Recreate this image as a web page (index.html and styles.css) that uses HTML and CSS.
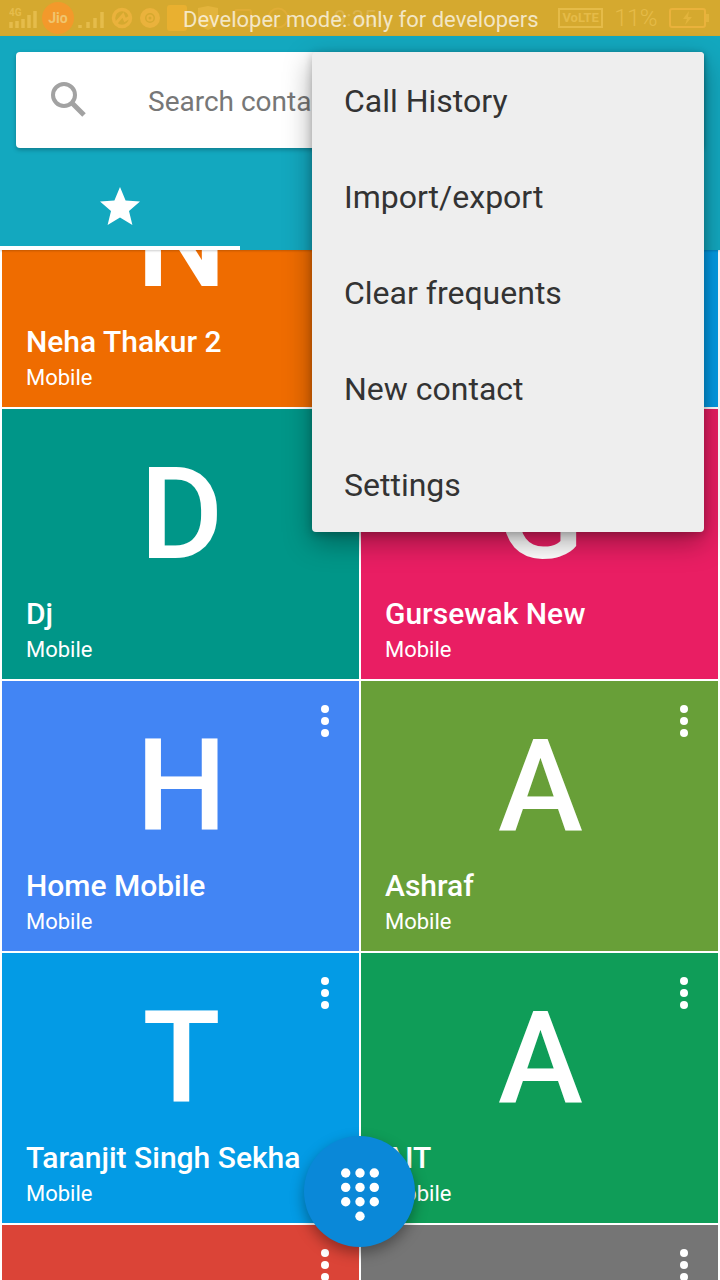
FILE: index.html
```html
<!DOCTYPE html>
<html lang="en">
<head>
<meta charset="utf-8">
<title>Contacts</title>
<link rel="stylesheet" href="styles.css">
</head>
<body>
<div class="screen">
  <div class="status">
    <div class="status-left">
      <svg class="sig4g" width="28" height="24" viewBox="0 0 28 24"><text x="0" y="10" class="tiny">4G</text><path d="M2 22v-6M8 22v-7M14 22v-9" class="bar"/><path d="M20 22V9M26 22V5" class="bar"/></svg>
      <span class="jio">Jio</span>
      <svg class="sig2" width="26" height="24" viewBox="0 0 26 24"><path d="M2 22v-3M10 22v-6M17 22v-10M24 22V6" class="bar"/></svg>
      <svg class="app1" width="22" height="24" viewBox="0 0 22 24"><circle cx="11" cy="12" r="8.500" class="ring thick2"/><path d="M5 17l7-8 2 5 5-3" class="ring-line"/></svg>
      <svg class="app2" width="22" height="24" viewBox="0 0 22 24"><circle cx="11" cy="12" r="7.500" class="ring thick"/><circle cx="11" cy="12" r="2.500" class="ring"/></svg>
      <span class="notif"></span>
      <svg class="shield" width="22" height="26" viewBox="0 0 22 26"><path d="M1 3l10-2 10 2v11c0 5-5 9-10 11C6 23 1 19 1 14z" class="fill"/></svg>
      <svg class="faint" width="20" height="22" viewBox="0 0 20 22"><rect x="2" y="3" width="16" height="16" rx="2" class="ring"/></svg>
      <svg class="faint" width="22" height="22" viewBox="0 0 22 22"><circle cx="11" cy="11" r="9.500" class="ring"/></svg>
    </div>
    <span class="clock">9:35</span>
    <div class="status-right">
      <span class="volte">VoLTE</span>
      <span class="pct">11%</span>
      <svg class="batt" width="40" height="22" viewBox="0 0 40 22"><rect x="1" y="2" width="35" height="18" rx="2" class="ring"/><rect x="37" y="7" width="3" height="8" class="fill"/><path d="M20 4l-6 8h4l-2 6 7-8h-4z" class="fill"/></svg>
    </div>
    <span class="toast">Developer mode: only for developers</span>
  </div>

  <header class="header">
    <div class="searchbar">
      <svg class="search-icon" width="36" height="36" viewBox="0 0 36 36"><circle cx="14" cy="14" r="11" class="lens"/><path d="M22 22l12 12" class="lens handle"/></svg>
      <span class="search-text">Search contacts</span>
    </div>
    <div class="tabs">
      <div class="tab active">
        <svg width="40" height="38" viewBox="0 0 40 38"><path class="star" d="M20 0l5.600 13.400L40 14.500 29 24l3.400 14L20 30.500 7.600 38 11 24 0 14.500l14.400-1.100z"/></svg>
      </div>
      <div class="tab"></div>
      <div class="tab"></div>
    </div>
  </header>

  <main class="viewport">
    <div class="grid">
      <article class="card orange"><div class="letter">N</div><div class="name">Neha Thakur 2</div><div class="kind">Mobile</div><span class="more"><i></i><i></i><i></i></span></article>
      <article class="card sky"><div class="letter"></div><div class="name"></div><div class="kind"></div></article>
      <article class="card teal"><div class="letter">D</div><div class="name">Dj</div><div class="kind">Mobile</div></article>
      <article class="card pink"><div class="letter">G</div><div class="name">Gursewak New</div><div class="kind">Mobile</div></article>
      <article class="card blue"><div class="letter">H</div><div class="name">Home Mobile</div><div class="kind">Mobile</div><span class="more"><i></i><i></i><i></i></span></article>
      <article class="card green"><div class="letter">A</div><div class="name">Ashraf</div><div class="kind">Mobile</div><span class="more"><i></i><i></i><i></i></span></article>
      <article class="card sky"><div class="letter">T</div><div class="name">Taranjit Singh Sekha</div><div class="kind">Mobile</div><span class="more"><i></i><i></i><i></i></span></article>
      <article class="card emerald"><div class="letter">A</div><div class="name">AIT</div><div class="kind">Mobile</div><span class="more"><i></i><i></i><i></i></span></article>
      <article class="card red"><span class="more"><i></i><i></i><i></i></span></article>
      <article class="card gray"><span class="more"><i></i><i></i><i></i></span></article>
    </div>
  </main>

  <nav class="menu">
    <div class="menu-item">Call History</div>
    <div class="menu-item">Import/export</div>
    <div class="menu-item">Clear frequents</div>
    <div class="menu-item">New contact</div>
    <div class="menu-item">Settings</div>
  </nav>

  <button class="fab" aria-label="Dial pad">
    <svg width="44" height="68" viewBox="0 0 44 68">
      <g class="keys">
        <circle cx="7.700" cy="7" r="4.700"/><circle cx="22" cy="7" r="4.700"/><circle cx="36.300" cy="7" r="4.700"/>
        <circle cx="7.700" cy="21.400" r="4.700"/><circle cx="22" cy="21.400" r="4.700"/><circle cx="36.300" cy="21.400" r="4.700"/>
        <circle cx="7.700" cy="35.800" r="4.700"/><circle cx="22" cy="35.800" r="4.700"/><circle cx="36.300" cy="35.800" r="4.700"/>
        <circle cx="22" cy="50.200" r="4.700"/>
      </g>
    </svg>
  </button>
</div>
</body>
</html>
```
FILE: styles.css
```css
* { box-sizing: border-box; }
html, body { margin: 0; padding: 0; background: #fff; }
body { font-family: Roboto, "Noto Sans", sans-serif; }

.screen { position: relative; width: 720px; height: 1280px; overflow: hidden; background: #fff; }

/* status bar */
.status { position: relative; height: 36px; background: #d5a92f; display: flex; align-items: center; justify-content: space-between; padding: 0 11px 0 9px; }
.status-left { display: flex; align-items: center; }
.status-right { display: flex; align-items: center; }
.bar { stroke: #e5bc4b; stroke-width: 3.500; fill: none; }
.tiny { font-size: 10px; font-weight: 700; fill: #e5bc4b; }
.ring { fill: none; stroke: #eab23c; stroke-width: 2; }
.ring.thick { stroke-width: 5; }
.ring.thick2 { stroke-width: 3.500; }
.ring-line { fill: none; stroke: #eab23c; stroke-width: 3; }
.fill { fill: #e3b43c; }
.faint { opacity: .55; margin-left: 14px; }
.jio { width: 32px; height: 32px; margin-left: 5px; border-radius: 50%; background: #f3992b; color: #f0c56e; font-size: 14px; font-weight: 700; display: flex; align-items: center; justify-content: center; }
.sig2 { margin-left: 4px; }
.app1 { margin-left: 7px; }
.app2 { margin-left: 6px; }
.notif { width: 20px; height: 26px; margin-left: 6px; border-radius: 3px; background: #e9b030; }
.shield { margin-left: 10px; }
.clock { position: absolute; left: 334px; top: 6px; font-size: 22px; color: #dcb550; }
.volte { border: 2px solid #e5bb48; color: #e5bb48; font-size: 13px; font-weight: 700; width: 45px; text-align: center; line-height: 14px; padding: 1px 0; }
.pct { margin-left: 11px; font-size: 24px; font-weight: 300; color: #e5bb48; letter-spacing: -.5px; }
.batt { margin-left: 12px; }
.toast { position: absolute; left: 183px; top: 6px; font-size: 22px; line-height: 28px; color: rgba(255,255,255,.72); white-space: nowrap; }

/* header */
.header { position: relative; z-index: 1; height: 214px; background: #13a8bf; padding: 16px 16px 0; display: flex; flex-direction: column; box-shadow: 0 1px 2px rgba(0,0,0,.2); }
.searchbar { height: 96px; background: #fff; border-radius: 4px; display: flex; align-items: center; padding: 0 0 2px 34px; gap: 62px; box-shadow: 0 2px 4px rgba(0,0,0,.25); }
.search-icon { flex: none; }
.lens { fill: none; stroke: #a2a2a2; stroke-width: 4; }
.handle { stroke-width: 5; }
.search-text { font-size: 28px; line-height: 36px; padding-top: 6px; color: #777; white-space: nowrap; }
.tabs { display: flex; margin: 0 -16px; flex: 1; }
.tab { flex: 0 0 240px; display: flex; align-items: flex-start; justify-content: center; padding-top: 39px; border-bottom: 4px solid transparent; }
.tab.active { border-bottom-color: #fff; padding-right: 1px; }
.star { fill: #fff; }

/* grid */
.viewport { height: 1030px; overflow: hidden; }
.grid { display: grid; grid-template-columns: 357px 357px; grid-auto-rows: 270px; column-gap: 2px; row-gap: 2px; padding: 0 2px; margin-top: -113px; }
.card { position: relative; display: flex; flex-direction: column; color: #fff; padding: 0 24px; }
.letter { height: 187px; padding: 35px 0 0 2px; font-size: 128px; line-height: 140px; font-weight: 500; text-align: center; }
.name { height: 36px; font-size: 30px; line-height: 36px; font-weight: 500; white-space: nowrap; }
.kind { margin-top: 4px; font-size: 22px; line-height: 28px; }
.more { position: absolute; top: 24px; right: 30px; display: flex; flex-direction: column; gap: 4px; }
.more i { display: block; width: 8px; height: 8px; border-radius: 50%; background: #fff; }
.orange { background: #ef6c00; }
.sky { background: #039be5; }
.teal { background: #009688; }
.pink { background: #e91e63; }
.blue { background: #4285f4; }
.green { background: #689f38; }
.emerald { background: #0f9d58; }
.red { background: #db4437; }
.gray { background: #757575; }

/* overflow menu */
.menu { position: absolute; z-index: 3; left: 312px; top: 52px; width: 392px; height: 480px; background: #eee; border-radius: 4px; box-shadow: 0 10px 28px rgba(0,0,0,.35), 0 2px 8px rgba(0,0,0,.2); }
.menu-item { height: 96px; padding: 2px 0 0 32px; display: flex; align-items: center; font-size: 32px; color: #333; }

/* dial pad button */
.fab { position: absolute; z-index: 2; left: 304px; top: 1136px; width: 111px; height: 111px; padding: 30px 0 0; border: 0; border-radius: 50%; background: #0a88d8; box-shadow: 0 6px 14px rgba(0,0,0,.35); display: flex; align-items: flex-start; justify-content: center; }
.keys { fill: #fff; }
```
